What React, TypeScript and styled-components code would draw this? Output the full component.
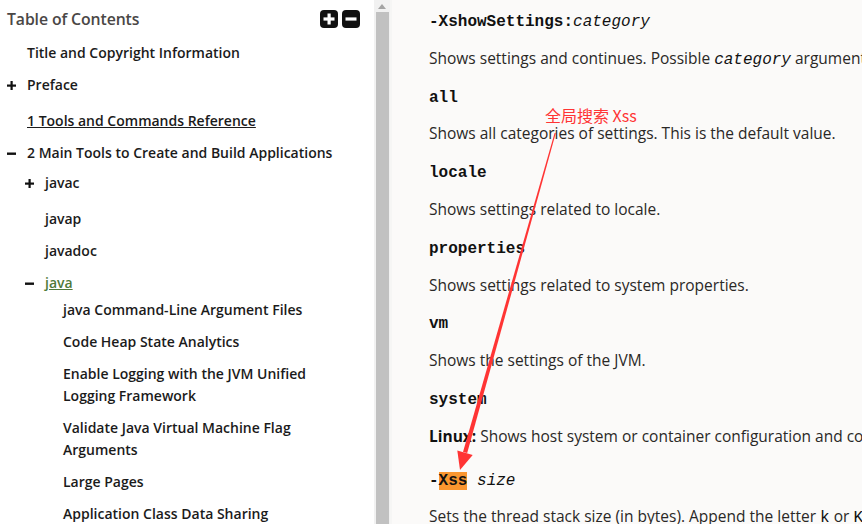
import React from "react";
import styled, { createGlobalStyle } from "styled-components";

const Global = createGlobalStyle`
  html, body { margin: 0; padding: 0; overflow: hidden; }
  body { width: 862px; height: 524px; }
`;

const Page = styled.div`
  position: relative;
  display: flex;
  width: 862px;
  height: 524px;
  overflow: hidden;
`;

const Sidebar = styled.aside`
  width: 374px;
  flex: none;
  background: #ffffff;
  font-family: "Open Sans", "Noto Sans", sans-serif;
  font-weight: 600;
  color: #1b1b1b;
  overflow: hidden;
`;

const SideHeader = styled.div`
  display: flex;
  align-items: center;
  justify-content: space-between;
  height: 37px;
  padding: 0 14px 0 7px;
`;

const SideTitle = styled.h2`
  margin: 0;
  font-size: 15.8px;
  font-weight: 600;
  color: #4a4746;
  letter-spacing: -0.1px;
`;

const HeaderButtons = styled.div`
  display: flex;
  gap: 4px;
`;

const SquareBtn = styled.span`
  display: block;
  width: 18px;
  height: 18px;
`;

const List = styled.ul<{ $shift?: number }>`
  list-style: none;
  margin: ${(p) => p.$shift ?? 0}px 0 0 0;
  padding: 0;
`;

const Item = styled.li<{ $collapsed?: boolean }>`
  margin-bottom: ${(p) => (p.$collapsed ? 4 : 0)}px;
`;

const Row = styled.div<{ $indent: number }>`
  display: flex;
  align-items: flex-start;
  padding: 5px 28px 5px ${(p) => p.$indent}px;
  font-size: 14px;
  line-height: 22px;
`;

const Toggle = styled.span`
  width: 20px;
  flex: none;
  display: flex;
  align-items: center;
  height: 22px;
`;

const Label = styled.span<{ $link?: boolean; $green?: boolean }>`
  text-decoration: ${(p) => (p.$link ? "underline" : "none")};
  color: ${(p) => (p.$green ? "#4f7a3a" : "inherit")};
`;

const ScrollBar = styled.div`
  width: 16px;
  flex: none;
  background: #f1f1f1;
  display: flex;
  flex-direction: column;
  align-items: center;
  border-right: 2px solid #f6f6f5;
`;

const ScrollArrow = styled.div`
  height: 12px;
  display: flex;
  align-items: center;
  justify-content: center;
`;

const ScrollThumb = styled.div`
  width: 13px;
  flex: 1;
  background: #c1c1c1;
`;

const Content = styled.main`
  flex: 1;
  background: #fbfaf9;
  padding: 9px 0 0 37px;
  overflow: hidden;
  white-space: nowrap;
  font-family: "Open Sans", "Noto Sans", sans-serif;
  font-size: 15.5px;
  color: #2a2826;
`;

const Block = styled.div<{ $extra?: number }>`
  height: 22px;
  line-height: 22px;
  padding-top: ${(p) => p.$extra ?? 0}px;
  margin: 0 0 15.8px 0;
`;

const Code = styled.span<{ $bold?: boolean; $italic?: boolean }>`
  font-family: "Liberation Mono", "Courier New", monospace;
  font-size: 16px;
  line-height: 1;
  font-weight: ${(p) => (p.$bold ? 700 : 400)};
  font-style: ${(p) => (p.$italic ? "italic" : "normal")};
  color: #111;
  white-space: pre;
`;

const Hit = styled.span`
  background: #fa962f;
`;

const Strong = styled.b`
  font-weight: 700;
  color: #111;
`;

const Note = styled.div`
  position: absolute;
  left: 545px;
  top: 104px;
  font-family: "Noto Sans CJK SC", "Noto Sans", sans-serif;
  font-size: 16px;
  line-height: 22px;
  color: #ff3434;
  white-space: nowrap;
`;

const Overlay = styled.svg`
  position: absolute;
  left: 0;
  top: 0;
  pointer-events: none;
`;

const Plus = () => (
  <svg width="9" height="9" viewBox="0 0 9 9">
    <rect x="3.5" y="0" width="2.2" height="9" fill="#111" />
    <rect x="0" y="3.5" width="9" height="2.2" fill="#111" />
  </svg>
);

const Minus = () => (
  <svg width="9" height="9" viewBox="0 0 9 9">
    <rect x="0" y="3.5" width="9" height="2.4" fill="#111" />
  </svg>
);

type Node = {
  label: string;
  toggle?: "plus" | "minus";
  link?: boolean;
  green?: boolean;
  children?: Node[];
  shift?: number;
};

const toc: Node[] = [
  { label: "Title and Copyright Information" },
  { label: "Preface", toggle: "plus" },
  { label: "1 Tools and Commands Reference", link: true },
  {
    label: "2 Main Tools to Create and Build Applications",
    toggle: "minus",
    shift: -2,
    children: [
      { label: "javac", toggle: "plus" },
      { label: "javap" },
      { label: "javadoc" },
      {
        label: "java",
        toggle: "minus",
        link: true,
        green: true,
        shift: -5,
        children: [
          { label: "java Command-Line Argument Files" },
          { label: "Code Heap State Analytics" },
          { label: "Enable Logging with the JVM Unified Logging Framework" },
          { label: "Validate Java Virtual Machine Flag Arguments" },
          { label: "Large Pages" },
          { label: "Application Class Data Sharing" },
        ],
      },
    ],
  },
];

const TocList: React.FC<{ nodes: Node[]; level: number; shift?: number }> = ({ nodes, level, shift }) => (
  <List $shift={shift}>
    {nodes.map((n) => (
      <Item key={n.label} $collapsed={n.toggle === "plus"}>
        <Row $indent={7 + level * 18}>
          <Toggle>{n.toggle === "plus" ? <Plus /> : n.toggle === "minus" ? <Minus /> : null}</Toggle>
          <Label $link={n.link} $green={n.green}>{n.label}</Label>
        </Row>
        {n.children && <TocList nodes={n.children} level={level + 1} shift={n.shift} />}
      </Item>
    ))}
  </List>
);

export default function App() {
  return (
    <>
      <Global />
      <Page>
        <Sidebar>
          <SideHeader>
            <SideTitle>Table of Contents</SideTitle>
            <HeaderButtons>
              <SquareBtn>
                <svg width="18" height="18" viewBox="0 0 18 18">
                  <rect x="0" y="0" width="18" height="18" rx="4" fill="#111" />
                  <rect x="7.5" y="3.5" width="3.2" height="11" fill="#fff" />
                  <rect x="3.5" y="7.4" width="11" height="3.2" fill="#fff" />
                </svg>
              </SquareBtn>
              <SquareBtn>
                <svg width="18" height="18" viewBox="0 0 18 18">
                  <rect x="0" y="0" width="18" height="18" rx="4" fill="#111" />
                  <rect x="3.5" y="7.4" width="11" height="3.2" fill="#fff" />
                </svg>
              </SquareBtn>
            </HeaderButtons>
          </SideHeader>
          <TocList nodes={toc} level={0} />
        </Sidebar>
        <ScrollBar>
          <ScrollArrow>
            <svg width="8" height="5" viewBox="0 0 8 5">
              <polygon points="0,5 4,0 8,5" fill="#a3a3a3" />
            </svg>
          </ScrollArrow>
          <ScrollThumb />
        </ScrollBar>
        <Content>
          <Block>
            <Code $bold>-XshowSettings:</Code>
            <Code $italic>category</Code>
          </Block>
          <Block>
            Shows settings and continues. Possible <Code $italic>category</Code> arguments for this option include the following:
          </Block>
          <Block><Code $bold>all</Code></Block>
          <Block>Shows all categories of settings. This is the default value.</Block>
          <Block><Code $bold>locale</Code></Block>
          <Block>Shows settings related to locale.</Block>
          <Block><Code $bold>properties</Code></Block>
          <Block>Shows settings related to system properties.</Block>
          <Block><Code $bold>vm</Code></Block>
          <Block>Shows the settings of the JVM.</Block>
          <Block><Code $bold>system</Code></Block>
          <Block>
            <Strong>Linux:</Strong> Shows host system or container configuration and continues.
          </Block>
          <Block $extra={5}>
            <Code $bold>-<Hit>Xss</Hit> </Code><Code $italic>size</Code>
          </Block>
          <Block>
            Sets the thread stack size (in bytes). Append the letter <Code>k</Code> or <Code>K</Code> to indicate KB, <Code>m</Code> or <Code>M</Code> to indicate MB.
          </Block>
        </Content>
        <Note>全局搜索 Xss</Note>
        <Overlay width="862" height="524" viewBox="0 0 862 524">
          <polygon points="554.6,133 555.8,133 467.2,453 463,452" fill="#ff3434" />
          <polygon points="460,470 457.3,450.5 472.7,454.9" fill="#ff3434" />
        </Overlay>
      </Page>
    </>
  );
}
